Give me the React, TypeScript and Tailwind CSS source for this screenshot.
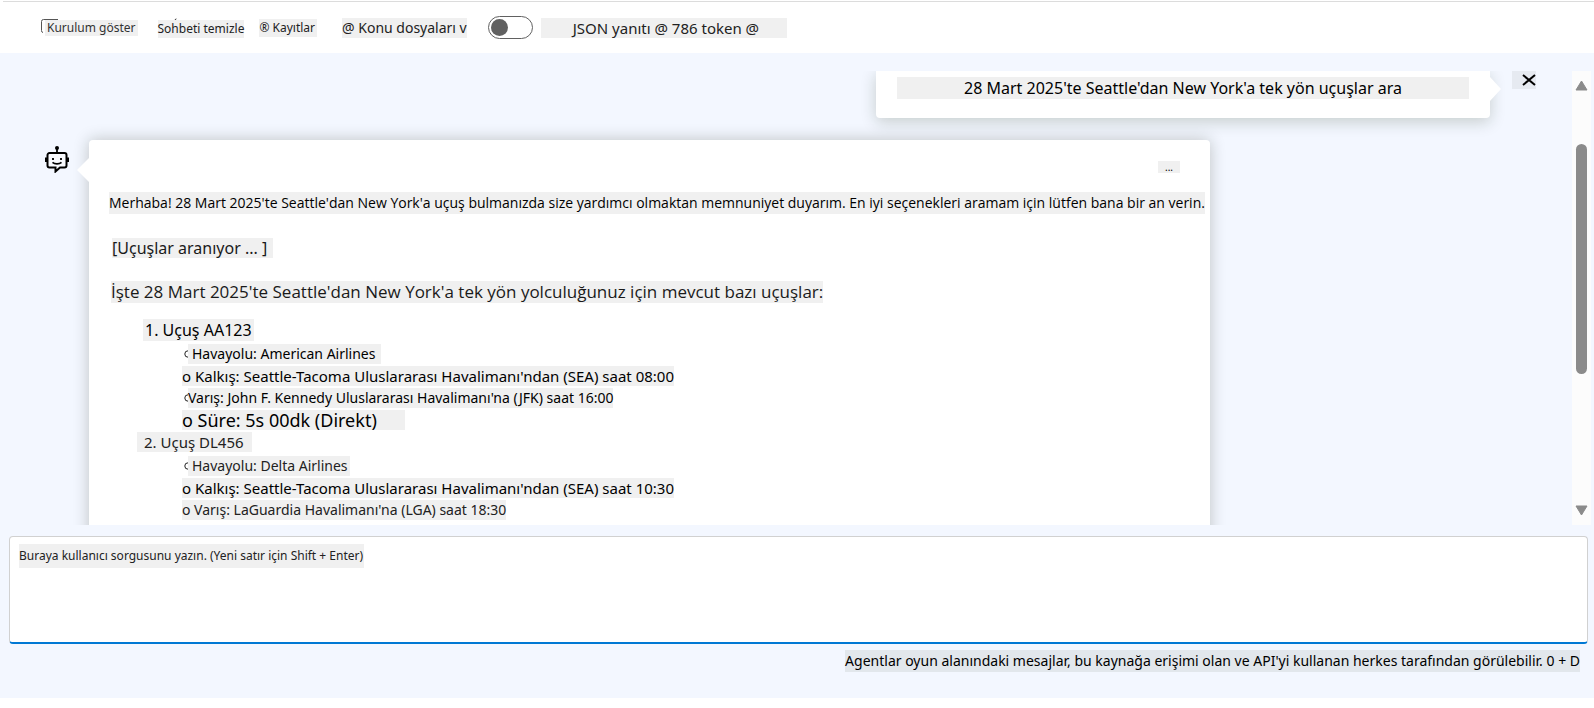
import type { ReactNode } from "react";

function Chip({ children, className = "" }: { children: ReactNode; className?: string }) {
  return <span className={`block whitespace-nowrap bg-[#f0f0f0] ${className}`}>{children}</span>;
}

function BotIcon() {
  return (
    <svg width="24" height="27" viewBox="0 0 24 27" fill="none" aria-hidden="true">
      <circle cx="12" cy="2" r="2" fill="#000" />
      <path d="M12 2v5" stroke="#000" strokeWidth="1.8" />
      <path
        d="M4.500 7h15a2 2 0 0 1 2 2v10.500a2 2 0 0 1-2 2H15l-4.500 4v-4h-6a2 2 0 0 1-2-2V9a2 2 0 0 1 2-2Z"
        stroke="#000"
        strokeWidth="2"
        fill="#f8fafe"
      />
      <path d="M1 11.500v4.500M23 11.500v4.500" stroke="#000" strokeWidth="2" />
      <path d="M8 12v2M16 12v2" stroke="#000" strokeWidth="1.8" />
      <path d="M7.500 16.300c2.200 2 6.800 2 9 0" stroke="#000" strokeWidth="1.700" />
    </svg>
  );
}

type Row = { text: string; marker?: boolean; className: string };

const flights: { title: string; className: string; rows: Row[] }[] = [
  {
    title: "1. Uçuş AA123",
    className: "ml-[34px] pl-0.5 pr-0.5 text-[16px] leading-[22px]",
    rows: [
      { text: "Havayolu: American Airlines", marker: true, className: "pl-1 pr-1.5 text-[14px]" },
      { text: "o Kalkış: Seattle-Tacoma Uluslararası Havalimanı'ndan (SEA) saat 08:00", className: "text-[15px]" },
      { text: "Varış: John F. Kennedy Uluslararası Havalimanı'na (JFK) saat 16:00", marker: true, className: "text-[14px]" },
      { text: "o Süre: 5s 00dk (Direkt)", className: "pr-7 text-[18px]" },
    ],
  },
  {
    title: "2. Uçuş DL456",
    className: "ml-7 pl-[7px] pr-2 text-[15px] leading-5 text-[#222]",
    rows: [
      { text: "Havayolu: Delta Airlines", marker: true, className: "pl-1 pr-0.5 text-[14px] text-[#222]" },
      { text: "o Kalkış: Seattle-Tacoma Uluslararası Havalimanı'ndan (SEA) saat 10:30", className: "text-[15px]" },
      { text: "o Varış: LaGuardia Havalimanı'na (LGA) saat 18:30", className: "text-[14px] text-[#222]" },
    ],
  },
];

export default function App() {
  return (
    <div className="flex h-screen flex-col bg-white font-['Noto_Sans',sans-serif] text-black">
      <header className="mt-px ml-[3px] flex h-[52px] shrink-0 items-center border-t border-[#dcdcdc] pl-[38px]">
        <button type="button" className="flex items-start">
          <svg className="-mr-[13px]" width="17" height="15" viewBox="0 0 17 15" fill="none" aria-hidden="true">
            <path d="M17 .500H2.500Q.500 .500 .500 2.500v9q0 2 1.500 2" stroke="#555" />
          </svg>
          <Chip className="relative mt-px pl-0.5 pr-0.5 text-[12px] leading-4 text-[#333]">Kurulum göster</Chip>
        </button>
        <button type="button" className="ml-5 flex flex-col">
          <svg className="ml-4" width="3" height="2" viewBox="0 0 3 2" aria-hidden="true">
            <path d="M2.500 0 .500 2h1.500Z" fill="#333" />
          </svg>
          <Chip className="text-[12px] leading-[18px] text-[#222]">Sohbeti temizle</Chip>
        </button>
        <button type="button" className="ml-[15px]">
          <Chip className="pr-0.5 text-[12px] leading-[18px] text-[#222]">® Kayıtlar</Chip>
        </button>
        <button type="button" className="ml-[25px]">
          <Chip className="text-[14px] leading-5 text-[#222]">@ Konu dosyaları v</Chip>
        </button>
        <label className="ml-[21px] flex items-center gap-2">
          <input
            type="checkbox"
            role="switch"
            className="flex h-[23px] w-[45px] appearance-none items-center rounded-full border border-[#616161] bg-white pl-0.5 before:size-[17px] before:rounded-full before:bg-[#616161] before:content-[''] checked:justify-end checked:pr-0.5"
          />
          <Chip className="pl-8 pr-7 text-[15px] leading-5 text-[#222]">JSON yanıtı @ 786 token @</Chip>
        </label>
      </header>

      <main className="mb-2.5 flex min-h-0 flex-1 flex-col bg-[#f3f7ff] pt-[18px]">
        <div className="flex min-h-0 flex-1 pr-[3px]">
          <section className="min-w-0 flex-1 overflow-hidden" aria-label="Sohbet">
            <div className="flex items-start justify-end pr-9">
              <div className="relative w-[614px] rounded-b bg-white px-[21px] pt-1.5 pb-[19px] shadow-[0_4px_16px_rgba(20,40,0,0.2)]">
                <Chip className="text-center text-[16px] leading-[22px]">
                  28 Mart 2025'te Seattle'dan New York'a tek yön uçuşlar ara
                </Chip>
                <svg className="absolute top-1.5 left-full" width="11" height="24" viewBox="0 0 11 24" aria-hidden="true">
                  <path d="M0 0 11 12 0 24Z" fill="#fff" />
                </svg>
              </div>
              <button type="button" aria-label="Kapat" className="ml-[22px] flex h-[18px] w-6 items-center justify-end bg-[#e6eaf1]">
                <svg width="14" height="12" viewBox="0 0 14 12" fill="none" aria-hidden="true">
                  <path d="M1 1 13 11M13 1 1 11" stroke="#000" strokeWidth="2" />
                </svg>
              </button>
            </div>

            <div className="mt-[22px] flex items-start pl-[45px]">
              <div className="mt-1.5 w-11">
                <BotIcon />
              </div>
              <article className="relative h-[500px] w-[1121px] rounded bg-white pt-[21px] pl-5 shadow-[0_0_16px_rgba(20,30,10,0.24)]">
                <svg className="absolute top-[18px] right-full" width="12" height="24" viewBox="0 0 12 24" aria-hidden="true">
                  <path d="M12 0 0 12 12 24Z" fill="#fff" />
                </svg>
                <div className="flex h-3 justify-end pr-[30px]">
                  <button type="button" aria-label="Diğer seçenekler" className="w-[22px] bg-[#f0f0f0] text-[10px] leading-3">
                    ...
                  </button>
                </div>
                <p className="mt-[19px] flex">
                  <Chip className="font-['Open_Sans',sans-serif] text-[14px] leading-[22px]">
                    Merhaba! 28 Mart 2025'te Seattle'dan New York'a uçuş bulmanızda size yardımcı olmaktan memnuniyet duyarım. En iyi seçenekleri aramam için lütfen bana bir an verin.
                  </Chip>
                </p>
                <p className="mt-6 flex pl-[3px]">
                  <Chip className="pr-1.5 text-[16px] leading-5 text-[#1a1a1a]">[Uçuşlar aranıyor ... ]</Chip>
                </p>
                <p className="mt-[23px] flex pl-0.5">
                  <Chip className="font-['Open_Sans',sans-serif] text-[17px] leading-[22px] text-[#1a1a1a]">
                    İşte 28 Mart 2025'te Seattle'dan New York'a tek yön yolculuğunuz için mevcut bazı uçuşlar:
                  </Chip>
                </p>
                <ol className="mt-4">
                  {flights.map((f) => (
                    <li key={f.title}>
                      <div className="flex h-[22px] items-center">
                        <Chip className={f.className}>{f.title}</Chip>
                      </div>
                      <ul className="pt-0.5 pl-[73px]">
                        {f.rows.map((r) => (
                          <li key={r.text} className="flex h-[22px] items-center">
                            {r.marker && (
                              <svg className="ml-0.5" width="4" height="8" viewBox="0 0 4 8" fill="none" aria-hidden="true">
                                <path d="M4 .800a3.200 3.200 0 0 0 0 6.400" stroke="#222" />
                              </svg>
                            )}
                            <Chip className={`leading-5 ${r.className}`}>{r.text}</Chip>
                          </li>
                        ))}
                      </ul>
                    </li>
                  ))}
                </ol>
              </article>
            </div>
          </section>

          <div className="flex w-[19px] flex-col items-center bg-[#fcfcfc] py-[9px]" aria-hidden="true">
            <svg width="13" height="11" viewBox="0 0 13 11">
              <path d="M6.500 1 12 10H1Z" fill="#8b8b8b" stroke="#8b8b8b" strokeLinejoin="round" />
            </svg>
            <div className="mt-[53px] h-[230px] w-[11px] rounded-full bg-[#8b8b8b]" />
            <svg className="mt-auto" width="13" height="11" viewBox="0 0 13 11">
              <path d="M6.500 10 12 1H1Z" fill="#8b8b8b" stroke="#8b8b8b" strokeLinejoin="round" />
            </svg>
          </div>
        </div>

        <form className="mt-[11px] flex flex-col pr-1.5 pl-[9px]">
          <textarea
            aria-label="Kullanıcı sorgusu"
            placeholder="Buraya kullanıcı sorgusunu yazın. (Yeni satır için Shift + Enter)"
            className="h-[108px] resize-none rounded border border-b-2 border-[#d1d1d1] border-b-[#0078d4] bg-white px-[9px] py-[7px] text-[12px] leading-6 outline-none placeholder:bg-[linear-gradient(#f0f0f0,#f0f0f0)] placeholder:bg-[length:345px_24px] placeholder:bg-no-repeat placeholder:text-[#222]"
          />
          <p className="mt-1.5 mb-[26px] flex justify-end pr-2">
            <span className="bg-[#e2e7ec] text-[14px] leading-[22px]">
              Agentlar oyun alanındaki mesajlar, bu kaynağa erişimi olan ve API'yi kullanan herkes tarafından görülebilir. 0 + D
            </span>
          </p>
        </form>
      </main>
    </div>
  );
}
